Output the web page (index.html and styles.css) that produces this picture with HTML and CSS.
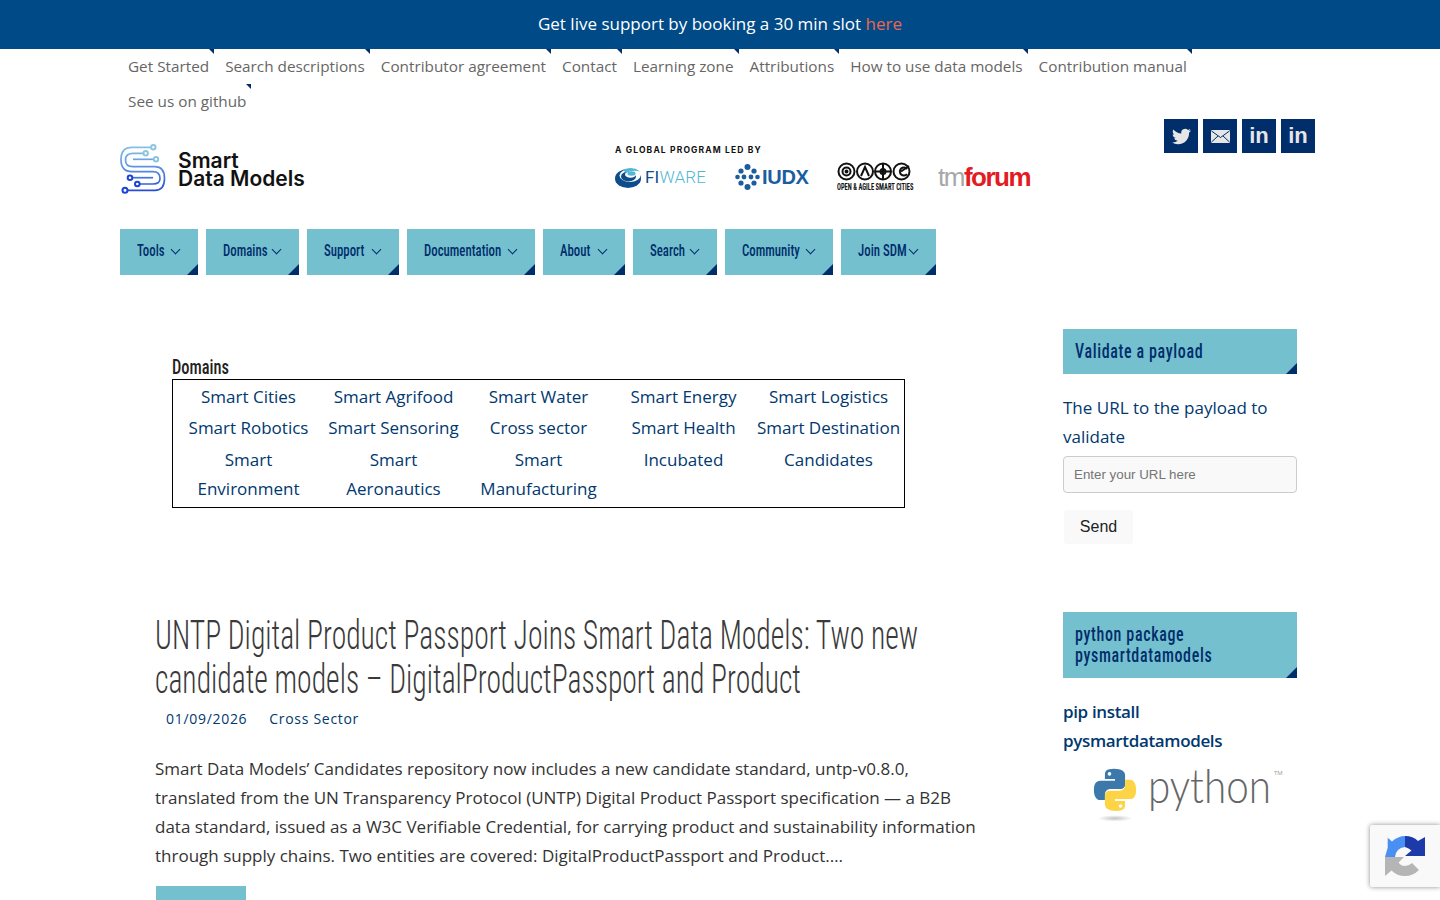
FILE: index.html
```html
<!DOCTYPE html>
<html lang="en">
<head>
    <meta charset="UTF-8" />
    <meta name="viewport" content="width=device-width, initial-scale=1.0"/>
    <title>Smart Data Models</title>
    <link rel="stylesheet" href="styles.css">
</head>
<body>
    <div class="banner">Get live support by booking a 30 min slot <a href="#">here</a></div>

    <div class="container">
        <ul class="top-nav">
            <li><a href="#">Get Started</a></li>
            <li><a href="#">Search descriptions</a></li>
            <li><a href="#">Contributor agreement</a></li>
            <li><a href="#">Contact</a></li>
            <li><a href="#">Learning zone</a></li>
            <li><a href="#">Attributions</a></li>
            <li><a href="#">How to use data models</a></li>
            <li><a href="#">Contribution manual</a></li>
            <li><a href="#">See us on github</a></li>
        </ul>

        <header class="masthead">
            <a class="logo" href="#">
                <svg width="46" height="50" viewBox="0 0 46 50" fill="none" stroke-width="1.7">
                    <defs>
                        <linearGradient id="sBand" gradientUnits="userSpaceOnUse" x1="0" y1="0" x2="0" y2="50">
                            <stop offset="0" stop-color="#8cc6e6"/>
                            <stop offset="0.45" stop-color="#5f94e4"/>
                            <stop offset="1" stop-color="#1c44d4"/>
                        </linearGradient>
                    </defs>
                    <g stroke="url(#sBand)">
                        <path d="M31 3.300H12Q1 3.300 1 15.500Q1 27.700 12 27.700H33Q40 27.700 40 34.500Q40 40 33 40H20"/>
                        <path d="M23 9.300H13Q5.500 9.300 5.500 16Q5.500 22.700 13 22.700H35Q44.500 22.700 44.500 34.500Q44.500 46.300 35 46.300H8"/>
                        <path d="M33.500 15.300H13"/>
                        <path d="M12.500 33.700H33"/>
                    </g>
                    <g stroke="#8cc6de" stroke-width="2">
                        <circle cx="33.300" cy="3.300" r="2.200"/>
                        <circle cx="25.700" cy="9.300" r="2.200"/>
                        <circle cx="36" cy="15.300" r="2.200"/>
                    </g>
                    <g stroke="#1c44d4" stroke-width="2">
                        <circle cx="10" cy="33.700" r="2.300"/>
                        <circle cx="17.300" cy="40" r="2.300"/>
                        <circle cx="5" cy="46.300" r="2.500"/>
                    </g>
                </svg>
                <span class="logo-text">Smart<br>Data Models</span>
            </a>

            <div class="partners">
                <div class="partners-title">A GLOBAL PROGRAM LED BY</div>
                <div class="partners-row">
                    <span class="fiware">
                        <svg width="26" height="21" viewBox="0 0 26 21">
                            <ellipse cx="13" cy="11.500" rx="13" ry="9.500" fill="#0d4d8c"/>
                            <ellipse cx="15" cy="8.500" rx="10.500" ry="6.500" fill="#fff"/>
                            <ellipse cx="13.500" cy="9.500" rx="7.500" ry="5" fill="#0d4d8c"/>
                            <ellipse cx="15.500" cy="7.500" rx="5.500" ry="3.200" fill="#fff"/>
                            <path d="M8 3Q17 -1.500 25 4.500Q17 2.500 11 6Z" fill="#54b7d3"/>
                            <ellipse cx="16.500" cy="6.500" rx="4" ry="2.200" fill="#54b7d3"/>
                        </svg>
                        <span class="fiware-text"><b>FI</b>WARE</span>
                    </span>
                    <span class="iudx">
                        <svg width="25" height="26" viewBox="0 0 25 26" fill="#1b5d9e">
                            <circle cx="12.500" cy="3" r="3"/>
                            <circle cx="6" cy="7" r="2.600"/>
                            <circle cx="19" cy="7" r="2.600"/>
                            <circle cx="2.500" cy="13" r="2.300"/>
                            <circle cx="22.500" cy="13" r="2.300"/>
                            <circle cx="9" cy="13" r="2.400"/>
                            <circle cx="16" cy="13" r="2.400"/>
                            <circle cx="6" cy="19" r="2.600"/>
                            <circle cx="19" cy="19" r="2.600"/>
                            <circle cx="12.500" cy="23" r="3"/>
                        </svg>
                        <span class="iudx-text">IUDX</span>
                    </span>
                    <span class="oasc">
                        <svg width="74" height="19" viewBox="0 0 74 19" fill="none" stroke="#111" stroke-width="2">
                            <circle cx="9.500" cy="9.500" r="8"/><circle cx="9.500" cy="9.500" r="4"/><circle cx="9.500" cy="9.500" r="1" fill="#111"/>
                            <circle cx="28" cy="9.500" r="8"/><path d="M24 14L28 5L32 14"/>
                            <circle cx="46" cy="9.500" r="8"/><path d="M46 2V17M39 9.500H53"/><circle cx="46" cy="9.500" r="2.500"/>
                            <circle cx="64.500" cy="9.500" r="8"/><path d="M70 7A4 4 0 1 0 70 12"/><path d="M64 9.500L72 4"/>
                        </svg>
                        <span class="oasc-text">OPEN &amp; AGILE SMART CITIES</span>
                    </span>
                    <span class="tmforum"><span class="tm">tm</span>forum</span>
                </div>
            </div>

            <div class="social">
                <a href="#">
                    <svg width="19" height="19" viewBox="0 0 24 24" fill="#e6e6e6"><path d="M23.953 4.57a10 10 0 01-2.825.775 4.958 4.958 0 002.163-2.723c-.951.555-2.005.959-3.127 1.184a4.92 4.92 0 00-8.384 4.482C7.69 8.095 4.067 6.13 1.64 3.162a4.822 4.822 0 00-.666 2.475c0 1.71.87 3.213 2.188 4.096a4.904 4.904 0 01-2.228-.616v.06a4.923 4.923 0 003.946 4.827 4.996 4.996 0 01-2.212.085 4.936 4.936 0 004.604 3.417 9.867 9.867 0 01-6.102 2.105c-.39 0-.779-.023-1.17-.067a13.995 13.995 0 007.557 2.209c9.053 0 13.998-7.496 13.998-13.985 0-.21 0-.42-.015-.63A9.935 9.935 0 0024 4.59z"/></svg>
                </a>
                <a href="#">
                    <svg width="19" height="13" viewBox="0 0 19 13"><rect width="19" height="13" rx="1" fill="#e6e6e6"/><path d="M0.500 1L9.500 7.500L18.500 1M0.500 12L7 6M18.500 12L12 6" fill="none" stroke="#002e6b" stroke-width="1"/></svg>
                </a>
                <a class="in" href="#">in</a>
                <a class="in" href="#">in</a>
            </div>
        </header>

        <nav class="main-nav">
            <a href="#"><span class="narrow">Tools</span><i class="chev"></i></a>
            <a href="#"><span class="narrow">Domains</span><i class="chev"></i></a>
            <a href="#"><span class="narrow">Support</span><i class="chev"></i></a>
            <a href="#"><span class="narrow">Documentation</span><i class="chev"></i></a>
            <a href="#"><span class="narrow">About</span><i class="chev"></i></a>
            <a href="#"><span class="narrow">Search</span><i class="chev"></i></a>
            <a href="#"><span class="narrow">Community</span><i class="chev"></i></a>
            <a href="#"><span class="narrow">Join SDM</span><i class="chev"></i></a>
        </nav>

        <div class="layout">
            <main class="content">
                <section class="domains">
                    <h4 class="narrow">Domains</h4>
                    <div class="domain-grid">
                        <a href="#">Smart Cities</a>
                        <a href="#">Smart Agrifood</a>
                        <a href="#">Smart Water</a>
                        <a href="#">Smart Energy</a>
                        <a href="#">Smart Logistics</a>
                        <a href="#">Smart Robotics</a>
                        <a href="#">Smart Sensoring</a>
                        <a href="#">Cross sector</a>
                        <a href="#">Smart Health</a>
                        <a href="#">Smart Destination</a>
                        <a href="#">Smart Environment</a>
                        <a href="#">Smart Aeronautics</a>
                        <a href="#">Smart Manufacturing</a>
                        <a href="#">Incubated</a>
                        <a href="#">Candidates</a>
                    </div>
                </section>

                <article class="post">
                    <h1 class="narrow">UNTP Digital Product Passport Joins Smart Data Models: Two new candidate models – DigitalProductPassport and Product</h1>
                    <div class="meta"><span>01/09/2026</span><a href="#">Cross Sector</a></div>
                    <p>Smart Data Models’ Candidates repository now includes a new candidate standard, untp-v0.8.0, translated from the UN Transparency Protocol (UNTP) Digital Product Passport specification — a B2B data standard, issued as a W3C Verifiable Credential, for carrying product and sustainability information through supply chains. Two entities are covered: DigitalProductPassport and Product.…</p>
                    <a class="read-more" href="#">Read more</a>
                </article>
            </main>

            <aside class="sidebar">
                <div class="widget">
                    <h3 class="widget-title"><span class="narrow">Validate a payload</span></h3>
                    <form>
                        <label for="payloadUrl">The URL to the payload to validate</label>
                        <input type="text" id="payloadUrl" placeholder="Enter your URL here">
                        <button type="button">Send</button>
                    </form>
                </div>
                <div class="widget">
                    <h3 class="widget-title"><span class="narrow">python package<br>pysmartdatamodels</span></h3>
                    <a class="pip" href="#">pip install pysmartdatamodels</a>
                    <div class="python-logo">
                        <svg width="44" height="55" viewBox="0 0 48 60">
                            <defs>
                                <radialGradient id="shadow"><stop offset="0" stop-color="#c4c4c4"/><stop offset="1" stop-color="#fff"/></radialGradient>
                            </defs>
                            <ellipse cx="24" cy="56" rx="19" ry="3.500" fill="url(#shadow)"/>
                            <path d="M23 2C14 2 13 5 13 9V13H24V15H8C3 15 1 19 1 25C1 31 3 36 8 36H13V30C13 26 16 24 20 24H30C33 24 35 22 35 19V9C35 5 31 2 23 2Z" fill="#3c78aa"/>
                            <circle cx="18" cy="7.500" r="2" fill="#fff"/>
                            <path d="M25 48C34 48 35 45 35 41V37H24V35H40C45 35 47 31 47 25C47 19 45 14 40 14H35V20C35 24 32 26 28 26H18C15 26 13 28 13 31V41C13 45 17 48 25 48Z" fill="#fdd445"/>
                            <circle cx="30" cy="42.500" r="2" fill="#fff"/>
                        </svg>
                        <span class="python-word">python</span>
                        <span class="tm-mark">TM</span>
                    </div>
                </div>
            </aside>
        </div>
    </div>

    <div class="recaptcha">
        <svg width="40" height="40" viewBox="0 0 40 40">
            <path d="M20 0Q13 0 7 5.500L2.700 1.700V11.700L0 21H10Q11 12 20 11Z" fill="#4a90f2"/>
            <path d="M20 0Q28 0 33 5L40 1V20H20L26.500 14.500Q24 12 20 11Z" fill="#1c3aa9"/>
            <path d="M0 21H19L13.500 26.500Q16 30 20 30Q24 30 27 27L34 34Q28 40 20 40Q12 40 6.500 34.500L0 40Z" fill="#b5b5b5"/>
        </svg>
    </div>
</body>
</html>
```

FILE: styles.css
```css
body {
    font-family: "Open Sans", sans-serif;
    margin: 0;
    padding: 0;
    background: #ffffff;
    color: #333;
}
a {
    color: inherit;
    text-decoration: none;
}
/* no condensed display font here, so Roboto gets squeezed */
.narrow {
    display: block;
    font-family: Roboto, sans-serif;
    font-stretch: 75%;
    white-space: nowrap;
    transform-origin: left center;
    transform: scaleX(0.8);
}
.banner {
    height: 49px;
    line-height: 48px;
    background: #004a87;
    color: #fff;
    text-align: center;
    font-size: 17px;
}
.banner a {
    color: #f0654e;
}
.container {
    width: 1200px;
    margin-left: 120px;
}

/* top links */
.top-nav {
    display: flex;
    flex-wrap: wrap;
    list-style: none;
    margin: 0;
    padding: 0;
    width: 1100px;
    font-size: 15.300px;
    color: #666;
}
.top-nav li {
    position: relative;
    height: 35px;
    line-height: 35px;
    padding: 0 5px 0 8px;
    margin-right: 3px;
}
.top-nav li::after {
    content: "";
    position: absolute;
    top: 0;
    right: 0;
    border-top: 5px solid #002e6b;
    border-left: 5px solid transparent;
}

/* logo row */
.masthead {
    display: flex;
    height: 110px;
}
.logo {
    display: flex;
    align-items: center;
    gap: 12px;
    width: 495px;
    height: 50px;
    margin-top: 25px;
}
.logo-text {
    padding-top: 1px;
    font-family: Inter, sans-serif;
    font-weight: 600;
    font-size: 21px;
    line-height: 18px;
    color: #111;
}
.partners {
    padding-top: 25px;
}
.partners-title {
    font-family: Inter, sans-serif;
    font-size: 8.500px;
    font-weight: 700;
    line-height: 12px;
    letter-spacing: 1.150px;
    color: #111;
}
.partners-row {
    display: flex;
    align-items: center;
    margin-top: 7px;
    height: 28px;
}
.fiware {
    display: flex;
    align-items: center;
    gap: 4px;
    width: 120px;
}
.fiware-text {
    font-family: Roboto, sans-serif;
    font-size: 17px;
    font-weight: 300;
    letter-spacing: 0.2px;
    color: #54b7d3;
}
.fiware-text b {
    font-weight: 400;
    color: #0d4d8c;
}
.iudx {
    display: flex;
    align-items: center;
    gap: 2px;
    width: 102px;
}
.iudx-text {
    font-family: "Liberation Sans", sans-serif;
    font-weight: 700;
    font-size: 20px;
    letter-spacing: -0.3px;
    color: #1b5d9e;
}
.oasc {
    display: flex;
    flex-direction: column;
    width: 101px;
}
.oasc-text {
    margin-top: 2px;
    font-family: Roboto, sans-serif;
    font-stretch: 75%;
    font-weight: 700;
    font-size: 9px;
    line-height: 9px;
    color: #111;
    white-space: nowrap;
    transform-origin: left center;
    transform: scaleX(0.72);
}
.tmforum {
    font-family: "Liberation Sans", sans-serif;
    font-weight: 700;
    font-size: 26px;
    letter-spacing: -1.500px;
    color: #e31b23;
}
.tm {
    font-weight: 400;
    color: #a7a7a7;
}
.social {
    display: flex;
    gap: 5px;
    margin-left: auto;
    margin-right: 5px;
    align-self: flex-start;
}
.social a {
    display: flex;
    align-items: center;
    justify-content: center;
    width: 34px;
    height: 34px;
    background: #002e6b;
}
.social .in {
    font-family: "Liberation Sans", sans-serif;
    font-weight: 700;
    font-size: 22px;
    color: #e6e6e6;
}

/* main menu */
.main-nav {
    display: grid;
    grid-template-columns: 78px 93px 92px 128px 82px 84px 108px 95px;
    gap: 8px;
}
.main-nav a {
    position: relative;
    display: flex;
    align-items: center;
    height: 46px;
    padding: 0 17px 3px;
    box-sizing: border-box;
    background: #75c0cf;
    color: #002e6b;
    font-size: 16px;
    font-weight: 500;
}
.main-nav .narrow {
    flex: 1;
    min-width: 0;
}
.main-nav a::after, .widget-title::after {
    content: "";
    position: absolute;
    right: 0;
    bottom: 0;
    border-bottom: 11px solid #002e6b;
    border-left: 11px solid transparent;
}
.chev {
    flex: none;
    width: 6px;
    height: 6px;
    margin: -3px 2px 0 0;
    border-right: 1px solid #002e6b;
    border-bottom: 1px solid #002e6b;
    transform: rotate(45deg);
}

/* page columns */
.layout {
    display: grid;
    grid-template-columns: 943px 234px;
    margin-top: 54px;
}
.domains {
    margin: 26px 0 0 52px;
}
.domains h4 {
    margin: 0;
    font-size: 20px;
    font-weight: 500;
    line-height: 24px;
    color: #222;
    transform: scaleX(0.82);
}
.domain-grid {
    display: grid;
    grid-template-columns: repeat(5, 145px);
    row-gap: 2px;
    width: 725px;
    padding: 2px 3px 4px;
    border: 1px solid #000;
    text-align: center;
    font-size: 17px;
    line-height: 29px;
    color: #00386f;
}
.domain-grid a:nth-child(n+11) {
    padding-top: 1px;
}
.post {
    margin: 106px 0 0 35px;
    width: 830px;
}
.post h1 {
    margin: 0;
    width: 1060px;
    font-size: 40px;
    font-weight: 350;
    line-height: 44px;
    color: #3a3a3a;
    white-space: normal;
    transform: scaleX(0.74);
}
.meta {
    display: flex;
    gap: 22px;
    margin: 5px 0 0 11px;
    font-size: 14px;
    line-height: 24px;
    letter-spacing: 0.7px;
    color: #00386f;
}
.post p {
    margin: 23px 0 0;
    font-size: 17px;
    line-height: 29px;
}
.read-more {
    display: block;
    box-sizing: border-box;
    width: 90px;
    margin: 16px 0 0 1px;
    padding: 20px 0 10px;
    text-align: center;
    background: #75c0cf;
    color: #002e6b;
    font-size: 15px;
}

/* sidebar */
.widget {
    margin-bottom: 68px;
}
.widget-title {
    position: relative;
    margin: 0;
    padding: 12px;
    background: #75c0cf;
    color: #002e6b;
    font-size: 20px;
    font-weight: 500;
    line-height: 21px;
    letter-spacing: 0.8px;
}
.widget label {
    display: block;
    margin-top: 19px;
    font-size: 17px;
    line-height: 29px;
    color: #00386f;
}
.widget input[type="text"] {
    display: block;
    box-sizing: border-box;
    width: 100%;
    height: 37px;
    margin-top: 5px;
    padding: 0 10px;
    border: 1px solid #ccc;
    border-radius: 4px;
    background: #f9f9f9;
    font-family: "Liberation Sans", sans-serif;
    font-size: 13.330px;
}
.widget button {
    display: block;
    width: 69px;
    height: 34px;
    margin: 17px 0 0 1px;
    border: none;
    border-radius: 3px;
    background: #f9f9f9;
    color: #222;
    font-family: "Liberation Sans", sans-serif;
    font-size: 16px;
}
.pip {
    display: block;
    margin-top: 19px;
    font-size: 17px;
    font-weight: 600;
    line-height: 29px;
    letter-spacing: -0.35px;
    color: #00386f;
}
.python-logo {
    display: flex;
    align-items: flex-start;
    gap: 11px;
    margin: 12px 0 0 30px;
}
.python-word {
    width: 120px;
    margin-top: -6px;
    font-family: Lato, sans-serif;
    font-weight: 300;
    font-size: 47px;
    line-height: 48px;
    color: #666;
    transform-origin: left center;
    transform: scaleX(0.86);
}
.tm-mark {
    margin: 2px 0 0 -5px;
    font-size: 6px;
    color: #999;
}

/* floating badge */
.recaptcha {
    position: fixed;
    right: 0;
    top: 825px;
    display: flex;
    align-items: center;
    box-sizing: border-box;
    width: 70px;
    height: 62px;
    padding-left: 15px;
    background: #f9f9f9;
    border-radius: 2px 0 0 2px;
    box-shadow: 0 0 5px rgba(0, 0, 0, 0.45);
}
```
